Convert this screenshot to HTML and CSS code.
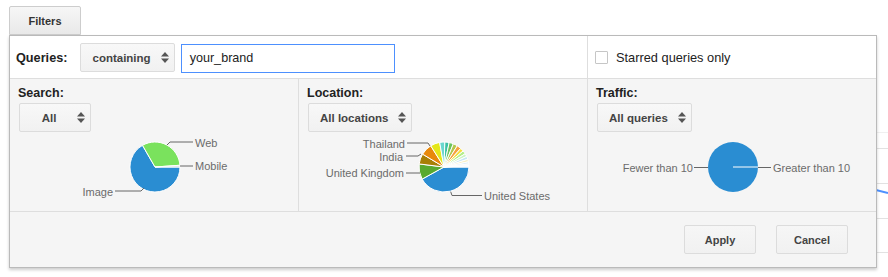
FILE: index.html
```html
<!DOCTYPE html>
<html lang="en">
<head>
    <meta charset="UTF-8">
    <meta name="viewport" content="width=device-width, initial-scale=1.0">
    <title>Search Queries - Filters</title>
    <link rel="stylesheet" href="styles.css">
</head>
<body>
    <div id="page">
        <svg class="graph" width="888" height="277">
            <line x1="860" y1="132.5" x2="888" y2="132.5" stroke="#f0f0f0"/>
            <line x1="860" y1="148.5" x2="888" y2="148.5" stroke="#e2e2e2"/>
            <line x1="860" y1="183.5" x2="888" y2="183.5" stroke="#e2e2e2"/>
            <line x1="860" y1="218.5" x2="888" y2="218.5" stroke="#e2e2e2"/>
            <line x1="860" y1="252.5" x2="888" y2="252.5" stroke="#e2e2e2"/>
            <line x1="860" y1="186" x2="888" y2="193" stroke="#4d90fe" stroke-width="2"/>
        </svg>

        <div class="filters">
            <div class="tab">Filters</div>
            <div class="panel">
                <div class="row-top">
                    <div class="queries">
                        <span class="queries-label">Queries:</span>
                        <div class="select">
                            <span class="select-text">containing</span>
                            <svg class="arrows" width="8" height="11" viewBox="0 0 8 11"><polygon points="0,4.5 4,0 8,4.5"/><polygon points="0,6.5 4,11 8,6.5"/></svg>
                        </div>
                        <div class="text-input">your_brand</div>
                    </div>
                    <div class="starred">
                        <span class="checkbox"></span>
                        <span>Starred queries only</span>
                    </div>
                </div>

                <div class="row-charts">
                    <div class="col">
                        <h4>Search:</h4>
                        <div class="select">
                            <span class="select-text short">All</span>
                            <svg class="arrows" width="8" height="11" viewBox="0 0 8 11"><polygon points="0,4.5 4,0 8,4.5"/><polygon points="0,6.5 4,11 8,6.5"/></svg>
                        </div>
                        <svg class="pie" width="288" height="70" viewBox="0 0 288 70">
                            <g stroke="#fff" stroke-width="1">
                                <path d="M145,33 L132.5,11.35 A25,25 0 1 0 170,33 Z" fill="#2a8dd2"/>
                                <path d="M145,33 L169.94,31.26 A25,25 0 0 0 132.5,11.35 Z" fill="#7ae25d"/>
                                <path d="M145,33 L170,33 A25,25 0 0 0 169.94,31.26 Z" fill="#d6d6d6"/>
                            </g>
                            <g class="leader">
                                <path d="M157,11 L160,8 H183"/>
                                <path d="M170,32 H183"/>
                                <path d="M105,57 H131 L134,54"/>
                            </g>
                            <text x="185" y="12.5">Web</text>
                            <text x="185" y="36">Mobile</text>
                            <text x="103" y="61.5" text-anchor="end">Image</text>
                        </svg>
                    </div>
                    <div class="col">
                        <h4>Location:</h4>
                        <div class="select">
                            <span class="select-text">All locations</span>
                            <svg class="arrows" width="8" height="11" viewBox="0 0 8 11"><polygon points="0,4.5 4,0 8,4.5"/><polygon points="0,6.5 4,11 8,6.5"/></svg>
                        </div>
                        <svg class="pie" width="288" height="70" viewBox="0 0 288 70">
                            <g stroke="#fff" stroke-width="1">
                                <path d="M145,33 L123.13,45.12 A25,25 0 0 0 170,33 Z" fill="#2a8dd2"/>
                                <path d="M145,33 L120.19,29.95 A25,25 0 0 0 123.13,45.12 Z" fill="#58a92f"/>
                                <path d="M145,33 L123.57,20.13 A25,25 0 0 0 120.19,29.95 Z" fill="#a77f05"/>
                                <path d="M145,33 L131.75,11.80 A25,25 0 0 0 123.57,20.13 Z" fill="#e8890b"/>
                                <path d="M145,33 L140.66,8.38 A25,25 0 0 0 131.75,11.80 Z" fill="#e4e71b"/>
                                <path d="M145,33 L145.87,8.02 A25,25 0 0 0 140.66,8.38 Z" fill="#6ad7cf"/>
                                <path d="M145,33 L150.20,8.55 A25,25 0 0 0 145.87,8.02 Z" fill="#3dc1a4"/>
                                <path d="M145,33 L154.37,9.82 A25,25 0 0 0 150.20,8.55 Z" fill="#6cc45e"/>
                                <path d="M145,33 L158.25,11.80 A25,25 0 0 0 154.37,9.82 Z" fill="#b4c64c"/>
                                <path d="M145,33 L161.73,14.42 A25,25 0 0 0 158.25,11.80 Z" fill="#f7a23f"/>
                                <path d="M145,33 L164.15,16.93 A25,25 0 0 0 161.73,14.42 Z" fill="#f5df3d"/>
                                <path d="M145,33 L166.20,19.75 A25,25 0 0 0 164.15,16.93 Z" fill="#b5ef8c"/>
                                <path d="M145,33 L167.66,22.43 A25,25 0 0 0 166.20,19.75 Z" fill="#cdf3c4"/>
                                <path d="M145,33 L168.78,25.27 A25,25 0 0 0 167.66,22.43 Z" fill="#c6e6f4"/>
                                <path d="M145,33 L169.45,27.80 A25,25 0 0 0 168.78,25.27 Z" fill="#f6f0c4"/>
                                <path d="M145,33 L169.81,29.95 A25,25 0 0 0 169.45,27.80 Z" fill="#d8eefa"/>
                                <path d="M145,33 L169.97,31.69 A25,25 0 0 0 169.81,29.95 Z" fill="#e6f4f8"/>
                                <path d="M145,33 L170,33 A25,25 0 0 0 169.97,31.69 Z" fill="#eef6fb"/>
                            </g>
                            <g class="leader">
                                <path d="M108,9 H129 L131,12"/>
                                <path d="M107,22 H119 L122,20"/>
                                <path d="M107,39 H121"/>
                                <path d="M151.7,57.7 L153,61.5 H183"/>
                            </g>
                            <text x="106" y="13.5" text-anchor="end">Thailand</text>
                            <text x="104" y="26.5" text-anchor="end">India</text>
                            <text x="105" y="42.5" text-anchor="end">United Kingdom</text>
                            <text x="185" y="65.5">United States</text>
                        </svg>
                    </div>
                    <div class="col">
                        <h4>Traffic:</h4>
                        <div class="select">
                            <span class="select-text">All queries</span>
                            <svg class="arrows" width="8" height="11" viewBox="0 0 8 11"><polygon points="0,4.5 4,0 8,4.5"/><polygon points="0,6.5 4,11 8,6.5"/></svg>
                        </div>
                        <svg class="pie" width="288" height="70" viewBox="0 0 288 70">
                            <circle cx="145" cy="33" r="25" fill="#2a8dd2"/>
                            <path d="M145,33 H170" stroke="#fff" stroke-width="1"/>
                            <g class="leader">
                                <path d="M106,33.5 H120"/>
                                <path d="M170,33.5 H183"/>
                            </g>
                            <text x="105" y="38" text-anchor="end">Fewer than 10</text>
                            <text x="185" y="38">Greater than 10</text>
                        </svg>
                    </div>
                </div>

                <div class="row-actions">
                    <button class="btn">Apply</button>
                    <button class="btn">Cancel</button>
                </div>
            </div>
        </div>
    </div>
</body>
</html>
```

FILE: styles.css
```css
body {
    margin: 0;
    background: #fff;
    font-family: "Liberation Sans", Arial, sans-serif;
    color: #222;
}

#page {
    position: relative;
    width: 888px;
    height: 277px;
    overflow: hidden;
}

.graph {
    position: absolute;
    top: 0;
    left: 0;
}

.filters {
    position: relative;
    padding: 6px 0 0 9px;
}

.tab {
    box-sizing: border-box;
    width: 72px;
    height: 29px;
    border: 1px solid #cdcdcd;
    border-radius: 2px 2px 0 0;
    background: linear-gradient(#f6f6f6, #e9e9e9);
    font-size: 11px;
    font-weight: bold;
    color: #333;
    display: flex;
    align-items: center;
    justify-content: center;
}

.panel {
    box-sizing: border-box;
    width: 868px;
    border: 1px solid #bababa;
    background: #f5f5f5;
    box-shadow: 0 2px 3px rgba(0, 0, 0, 0.2);
}

.row-top {
    display: grid;
    grid-template-columns: 578px 1fr;
    height: 42px;
    background: #fff;
    border-bottom: 1px solid #dedede;
}

.queries {
    display: flex;
    align-items: center;
    padding: 1px 0 0 6px;
    border-right: 1px solid #dedede;
}

.queries-label {
    font-size: 12.7px;
    font-weight: bold;
    margin-right: 13px;
}

.select {
    box-sizing: border-box;
    height: 29px;
    display: inline-flex;
    align-items: center;
    padding: 0 5px 0 11px;
    border: 1px solid #dcdcdc;
    border-radius: 2px;
    background: linear-gradient(#f8f8f8, #f1f1f1);
}

.select-text {
    font-size: 11.5px;
    font-weight: bold;
    color: #444;
    margin-right: 10px;
    text-align: center;
}

.select-text.short {
    min-width: 36px;
}

.arrows {
    fill: #555;
    display: block;
}

.text-input {
    box-sizing: border-box;
    width: 214px;
    height: 29px;
    margin: 1px 0 0 6px;
    padding: 0 8px;
    border: 1px solid #4d90fe;
    font-size: 12.6px;
    line-height: 27px;
    color: #222;
}

.starred {
    display: flex;
    align-items: center;
    gap: 8px;
    padding: 1px 0 0 7px;
    font-size: 12.8px;
    color: #222;
}

.checkbox {
    box-sizing: border-box;
    width: 13px;
    height: 13px;
    border: 1px solid #c6c6c6;
    border-radius: 1px;
    background: #fff;
}

.row-charts {
    display: grid;
    grid-template-columns: 289px 289px 288px;
    height: 132px;
    border-bottom: 1px solid #dedede;
}

.col {
    padding: 7px 0 0 9px;
    border-right: 1px solid #dedede;
}

.col:last-child {
    border-right: none;
}

.col h4 {
    margin: 0 0 2px -1px;
    font-size: 12.5px;
    line-height: 15px;
    font-weight: bold;
    color: #222;
}

.pie {
    display: block;
    margin: 2px 0 0 -9px;
}

.pie text {
    font-family: "Liberation Sans", Arial, sans-serif;
    font-size: 11px;
    fill: #6b6b6b;
}

.leader path {
    fill: none;
    stroke: #666;
    stroke-width: 1;
}

.row-actions {
    height: 55px;
    display: flex;
    align-items: center;
    justify-content: flex-end;
    gap: 20px;
    padding-right: 28px;
}

.btn {
    box-sizing: border-box;
    width: 72px;
    height: 29px;
    border: 1px solid #dcdcdc;
    border-radius: 2px;
    background: linear-gradient(#f6f6f6, #f1f1f1);
    font-family: "Liberation Sans", Arial, sans-serif;
    font-size: 11px;
    font-weight: bold;
    color: #444;
    padding: 0;
}
```
